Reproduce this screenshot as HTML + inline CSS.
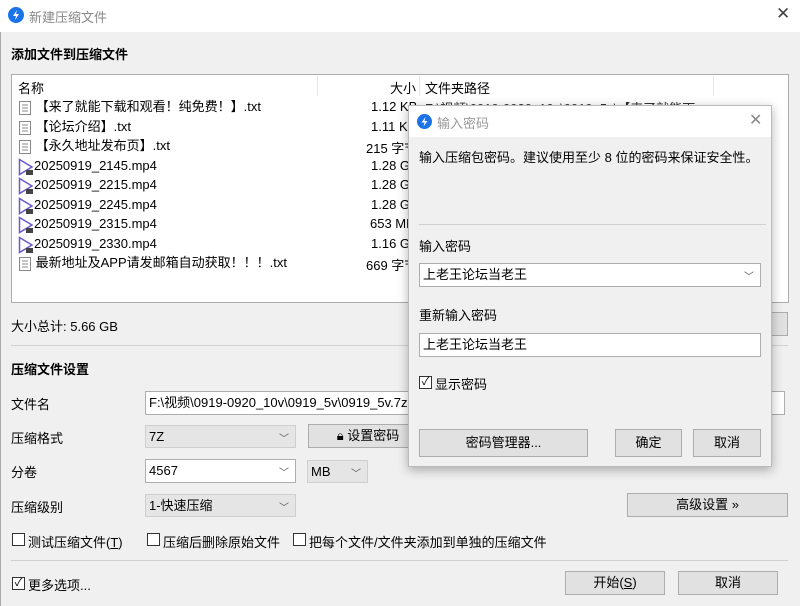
<!DOCTYPE html>
<html><head><meta charset="utf-8"><style>
*{margin:0;padding:0;box-sizing:border-box}
body{width:800px;height:606px;overflow:hidden;background:#f0f0f0;font-family:"Liberation Sans","Noto Sans CJK SC",sans-serif;font-size:13px;color:#000;position:relative}
.a{position:absolute;white-space:nowrap}
.btn{position:absolute;background:#e1e1e1;border:1px solid #adadad;text-align:center;font-size:13px}
.inp{position:absolute;background:#fff;border:1px solid #7a7a7a;padding-left:3px;font-size:13px}
.sel{position:absolute;background:#e5e5e5;border:1px solid #cfcfcf;padding-left:3px;font-size:13px}
.chev{position:absolute;right:6px;top:3px;color:#555;font-size:10px}
.cb{position:absolute;width:13px;height:13px;border:1px solid #333;background:#fff}
.sep{position:absolute;height:1px;background:#d0d0d0}
.row{position:absolute;left:18px;height:20px;line-height:20px}
.ic{display:inline-block;vertical-align:middle}
</style></head><body>
<div class="a" style="left:0;top:0;width:800px;height:32px;background:#fff"></div>
<svg class="a" style="left:8px;top:7px" width="16" height="16"><circle cx="8" cy="8" r="8" fill="#1a73e8"/><path d="M9 3L5 9h3l-1 4 4-6H8z" fill="#fff"/></svg>
<div class="a" style="left:29px;top:7px;color:#888;font-size:13px">新建压缩文件</div>
<div class="a" style="left:776px;top:4px;color:#444;font-size:17px">✕</div>
<div class="a" style="left:11px;top:44px;font-weight:bold">添加文件到压缩文件</div>
<div class="a" style="left:11px;top:74px;width:778px;height:229px;background:#fff;border:1px solid #adadad"></div>
<div class="a" style="left:18px;top:78px">名称</div>
<div class="a" style="left:317px;top:76px;width:1px;height:20px;background:#e5e5e5"></div>
<div class="a" style="left:390px;top:78px">大小</div>
<div class="a" style="left:419px;top:76px;width:1px;height:20px;background:#e5e5e5"></div>
<div class="a" style="left:425px;top:78px">文件夹路径</div>
<div class="a" style="left:713px;top:76px;width:1px;height:20px;background:#e5e5e5"></div>
<div class="a" style="left:425px;top:98px;color:#333">F:\视频\0919-0920_10v\0919_5v\【来了就能下</div>

<div class="row" style="top:97px"><svg class="ic" width="14" height="16"><rect x="1.5" y="1.5" width="11" height="13" fill="#fff" stroke="#888"/><path d="M4 5h6M4 8h6M4 11h6" stroke="#888"/></svg> 【来了就能下载和观看！纯免费！】.txt</div>
<div class="row" style="top:117px"><svg class="ic" width="14" height="16"><rect x="1.5" y="1.5" width="11" height="13" fill="#fff" stroke="#888"/><path d="M4 5h6M4 8h6M4 11h6" stroke="#888"/></svg> 【论坛介绍】.txt</div>
<div class="row" style="top:136px"><svg class="ic" width="14" height="16"><rect x="1.5" y="1.5" width="11" height="13" fill="#fff" stroke="#888"/><path d="M4 5h6M4 8h6M4 11h6" stroke="#888"/></svg> 【永久地址发布页】.txt</div>
<div class="row" style="top:156px"><svg class="ic" width="16" height="18"><path d="M1.5 1.5L14 9 1.5 16.5z" fill="none" stroke="#6a5acd" stroke-width="1.5"/><rect x="8" y="12" width="7" height="5" fill="#444"/></svg>20250919_2145.mp4</div>
<div class="row" style="top:175px"><svg class="ic" width="16" height="18"><path d="M1.5 1.5L14 9 1.5 16.5z" fill="none" stroke="#6a5acd" stroke-width="1.5"/><rect x="8" y="12" width="7" height="5" fill="#444"/></svg>20250919_2215.mp4</div>
<div class="row" style="top:195px"><svg class="ic" width="16" height="18"><path d="M1.5 1.5L14 9 1.5 16.5z" fill="none" stroke="#6a5acd" stroke-width="1.5"/><rect x="8" y="12" width="7" height="5" fill="#444"/></svg>20250919_2245.mp4</div>
<div class="row" style="top:214px"><svg class="ic" width="16" height="18"><path d="M1.5 1.5L14 9 1.5 16.5z" fill="none" stroke="#6a5acd" stroke-width="1.5"/><rect x="8" y="12" width="7" height="5" fill="#444"/></svg>20250919_2315.mp4</div>
<div class="row" style="top:234px"><svg class="ic" width="16" height="18"><path d="M1.5 1.5L14 9 1.5 16.5z" fill="none" stroke="#6a5acd" stroke-width="1.5"/><rect x="8" y="12" width="7" height="5" fill="#444"/></svg>20250919_2330.mp4</div>
<div class="row" style="top:253px"><svg class="ic" width="14" height="16"><rect x="1.5" y="1.5" width="11" height="13" fill="#fff" stroke="#888"/><path d="M4 5h6M4 8h6M4 11h6" stroke="#888"/></svg> 最新地址及APP请发邮箱自动获取！！！.txt</div>
<div class="a" style="left:371px;top:99px">1.12 KB</div>
<div class="a" style="left:371px;top:119px">1.11 KB</div>
<div class="a" style="left:366px;top:138px">215 字节</div>
<div class="a" style="left:371px;top:158px">1.28 GB</div>
<div class="a" style="left:371px;top:177px">1.28 GB</div>
<div class="a" style="left:371px;top:197px">1.28 GB</div>
<div class="a" style="left:370px;top:216px">653 MB</div>
<div class="a" style="left:371px;top:236px">1.16 GB</div>
<div class="a" style="left:366px;top:255px">669 字节</div>

<div class="a" style="left:11px;top:316px">大小总计: 5.66 GB</div>
<div class="btn" style="left:760px;top:312px;width:28px;height:24px"></div>
<div class="sep" style="left:11px;top:345px;width:777px"></div>
<div class="a" style="left:11px;top:359px;font-weight:bold">压缩文件设置</div>
<div class="a" style="left:11px;top:394px">文件名</div>
<div class="inp" style="left:145px;top:391px;width:640px;height:24px;line-height:21px;border-color:#adadad">F:\视频\0919-0920_10v\0919_5v\0919_5v.7z</div>
<div class="a" style="left:11px;top:428px">压缩格式</div>
<div class="sel" style="left:145px;top:425px;width:151px;height:23px;line-height:21px">7Z<span class="chev">﹀</span></div>
<div class="btn" style="left:308px;top:424px;width:120px;height:24px;line-height:22px">🔒︎ 设置密码</div>
<div class="a" style="left:11px;top:462px">分卷</div>
<div class="inp" style="left:145px;top:459px;width:151px;height:24px;line-height:21px;border-color:#adadad">4567<span class="chev">﹀</span></div>
<div class="sel" style="left:307px;top:460px;width:61px;height:23px;line-height:21px">MB<span class="chev">﹀</span></div>
<div class="a" style="left:11px;top:497px">压缩级别</div>
<div class="sel" style="left:145px;top:494px;width:151px;height:23px;line-height:21px">1-快速压缩<span class="chev">﹀</span></div>
<div class="btn" style="left:627px;top:493px;width:161px;height:24px;line-height:22px">高级设置 »</div>
<div class="cb" style="left:12px;top:533px"></div><div class="a" style="left:28px;top:532px">测试压缩文件(<u>T</u>)</div>
<div class="cb" style="left:147px;top:533px"></div><div class="a" style="left:163px;top:532px">压缩后删除原始文件</div>
<div class="cb" style="left:293px;top:533px"></div><div class="a" style="left:309px;top:532px">把每个文件/文件夹添加到单独的压缩文件</div>
<div class="sep" style="left:11px;top:560px;width:777px"></div>
<div class="cb" style="left:12px;top:577px;font-size:11px;line-height:11px;text-align:center">✓</div><div class="a" style="left:28px;top:575px">更多选项...</div>
<div class="btn" style="left:565px;top:571px;width:100px;height:24px;line-height:22px">开始(<u>S</u>)</div>
<div class="btn" style="left:678px;top:571px;width:100px;height:24px;line-height:22px">取消</div>
<div class="a" style="left:0;top:32px;width:1px;height:574px;background:#aaa"></div>

<!-- dialog -->
<div class="a" style="left:408px;top:105px;width:364px;height:362px;background:#f0f0f0;border:1px solid #bbb;box-shadow:0 3px 10px rgba(0,0,0,.3)">
<div class="a" style="left:0;top:0;width:362px;height:31px;background:#fff"></div>
<svg class="a" style="left:8px;top:8px" width="15" height="15"><circle cx="7.5" cy="7.5" r="7.5" fill="#1a73e8"/><path d="M8.5 3L4.5 8.5h3l-1 4 4-5.5h-3z" fill="#fff"/></svg>
<div class="a" style="left:28px;top:7px;color:#999">输入密码</div>
<div class="a" style="left:340px;top:4px;color:#888;font-size:16px">✕</div>
<div class="a" style="left:10px;top:41px">输入压缩包密码。建议使用至少 8 位的密码来保证安全性。</div>
<div class="sep" style="left:10px;top:118px;width:347px"></div>
<div class="a" style="left:10px;top:130px">输入密码</div>
<div class="inp" style="left:10px;top:157px;width:342px;height:24px;line-height:21px;border-color:#adadad">上老王论坛当老王<span class="chev">﹀</span></div>
<div class="a" style="left:10px;top:199px">重新输入密码</div>
<div class="inp" style="left:10px;top:227px;width:342px;height:24px;line-height:21px;border-color:#adadad">上老王论坛当老王</div>
<div class="cb" style="left:10px;top:270px;font-size:11px;line-height:11px;text-align:center">✓</div><div class="a" style="left:26px;top:268px">显示密码</div>
<div class="btn" style="left:10px;top:323px;width:169px;height:28px;line-height:26px">密码管理器...</div>
<div class="btn" style="left:206px;top:323px;width:67px;height:28px;line-height:26px">确定</div>
<div class="btn" style="left:284px;top:323px;width:68px;height:28px;line-height:26px">取消</div>
</div>
</body></html>
